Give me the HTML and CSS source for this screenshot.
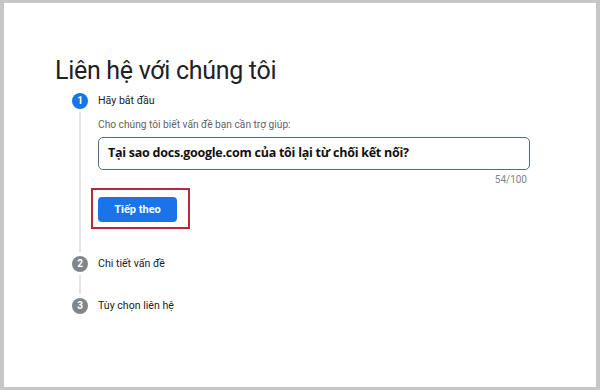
FILE: index.html
```html
<!DOCTYPE html>
<html lang="vi">
<head>
    <meta charset="UTF-8">
    <meta name="viewport" content="width=device-width, initial-scale=1.0">
    <title>Liên hệ với chúng tôi</title>
    <link rel="stylesheet" href="styles.css">
</head>
<body>

<div class="frame">
    <h1 class="title">Liên hệ với chúng tôi</h1>

    <div class="steps">
        <div class="step active">
            <div class="rail">
                <span class="dot">1</span>
                <span class="line"></span>
            </div>
            <div class="step-body">
                <div class="step-name">Hãy bắt đầu</div>
                <label class="prompt" for="issue">Cho chúng tôi biết vấn đề bạn cần trợ giúp:</label>
                <div class="field">Tại sao docs.google.com của tôi lại từ chối kết nối?</div>
                <div class="counter">54/100</div>
                <div class="highlight">
                    <button class="next" type="button">Tiếp theo</button>
                </div>
            </div>
        </div>

        <div class="step">
            <div class="rail">
                <span class="dot">2</span>
                <span class="line short"></span>
            </div>
            <div class="step-body">
                <div class="step-name">Chi tiết vấn đề</div>
            </div>
        </div>

        <div class="step">
            <div class="rail">
                <span class="dot">3</span>
            </div>
            <div class="step-body">
                <div class="step-name">Tùy chọn liên hệ</div>
            </div>
        </div>
    </div>
</div>

</body>
</html>
```

FILE: styles.css
```css
html, body {
    margin: 0;
    height: 100%;
}
body {
    background-color: #c6c6c6;
    padding: 3px 4px;
    box-sizing: border-box;
    font-family: Roboto, "Liberation Sans", Arial, sans-serif;
    color: #202124;
}
.frame {
    background-color: #fff;
    height: 100%;
    padding: 52px 0 0 51px;
    box-sizing: border-box;
}
.title {
    margin: 0;
    font-size: 25px;
    font-weight: 400;
    letter-spacing: -0.3px;
    line-height: 32px;
    color: #202124;
}
.steps {
    margin: 6px 0 0 17px;
}
.step {
    display: grid;
    grid-template-columns: 16px 1fr;
    column-gap: 10px;
}
.rail {
    display: flex;
    flex-direction: column;
    align-items: center;
}
.dot {
    width: 16px;
    height: 16px;
    border-radius: 50%;
    background-color: #80868b;
    color: #fff;
    font-size: 10px;
    font-weight: 700;
    line-height: 16px;
    text-align: center;
    flex-shrink: 0;
}
.active .dot {
    background-color: #1a73e8;
}
.line {
    width: 2px;
    flex: 1;
    background-color: #e3e4e6;
    margin: 3px 0 4px;
}
.step-name {
    font-size: 10.6px;
    line-height: 16px;
    color: #202124;
}
.step-body {
    min-height: 42px;
}
.active .step-body {
    padding-bottom: 27px;
}
.prompt {
    display: block;
    margin-top: 8px;
    font-size: 10.2px;
    line-height: 16px;
    color: #5f6368;
}
.field {
    margin-top: 4px;
    width: 432px;
    height: 33px;
    box-sizing: border-box;
    border: 1.5px solid #4f6e82;
    border-radius: 5px;
    padding: 0 9px;
    font-family: "Open Sans", "Noto Sans", sans-serif;
    font-size: 12.5px;
    font-weight: 700;
    letter-spacing: -0.25px;
    line-height: 30px;
    color: #111;
}
.counter {
    width: 429px;
    text-align: right;
    font-size: 10px;
    line-height: 14px;
    margin-top: 3px;
    color: #80868b;
}
.highlight {
    display: inline-block;
    margin: 1px 0 0 -7px;
    border: 2px solid #b8283a;
    padding: 7px 11px 5px 5px;
}
.next {
    display: block;
    width: 79px;
    height: 25px;
    border: none;
    border-radius: 4px;
    background-color: #1a73e8;
    color: #fff;
    font-family: Roboto, "Liberation Sans", Arial, sans-serif;
    font-size: 11px;
    font-weight: 700;
    cursor: pointer;
}
```
